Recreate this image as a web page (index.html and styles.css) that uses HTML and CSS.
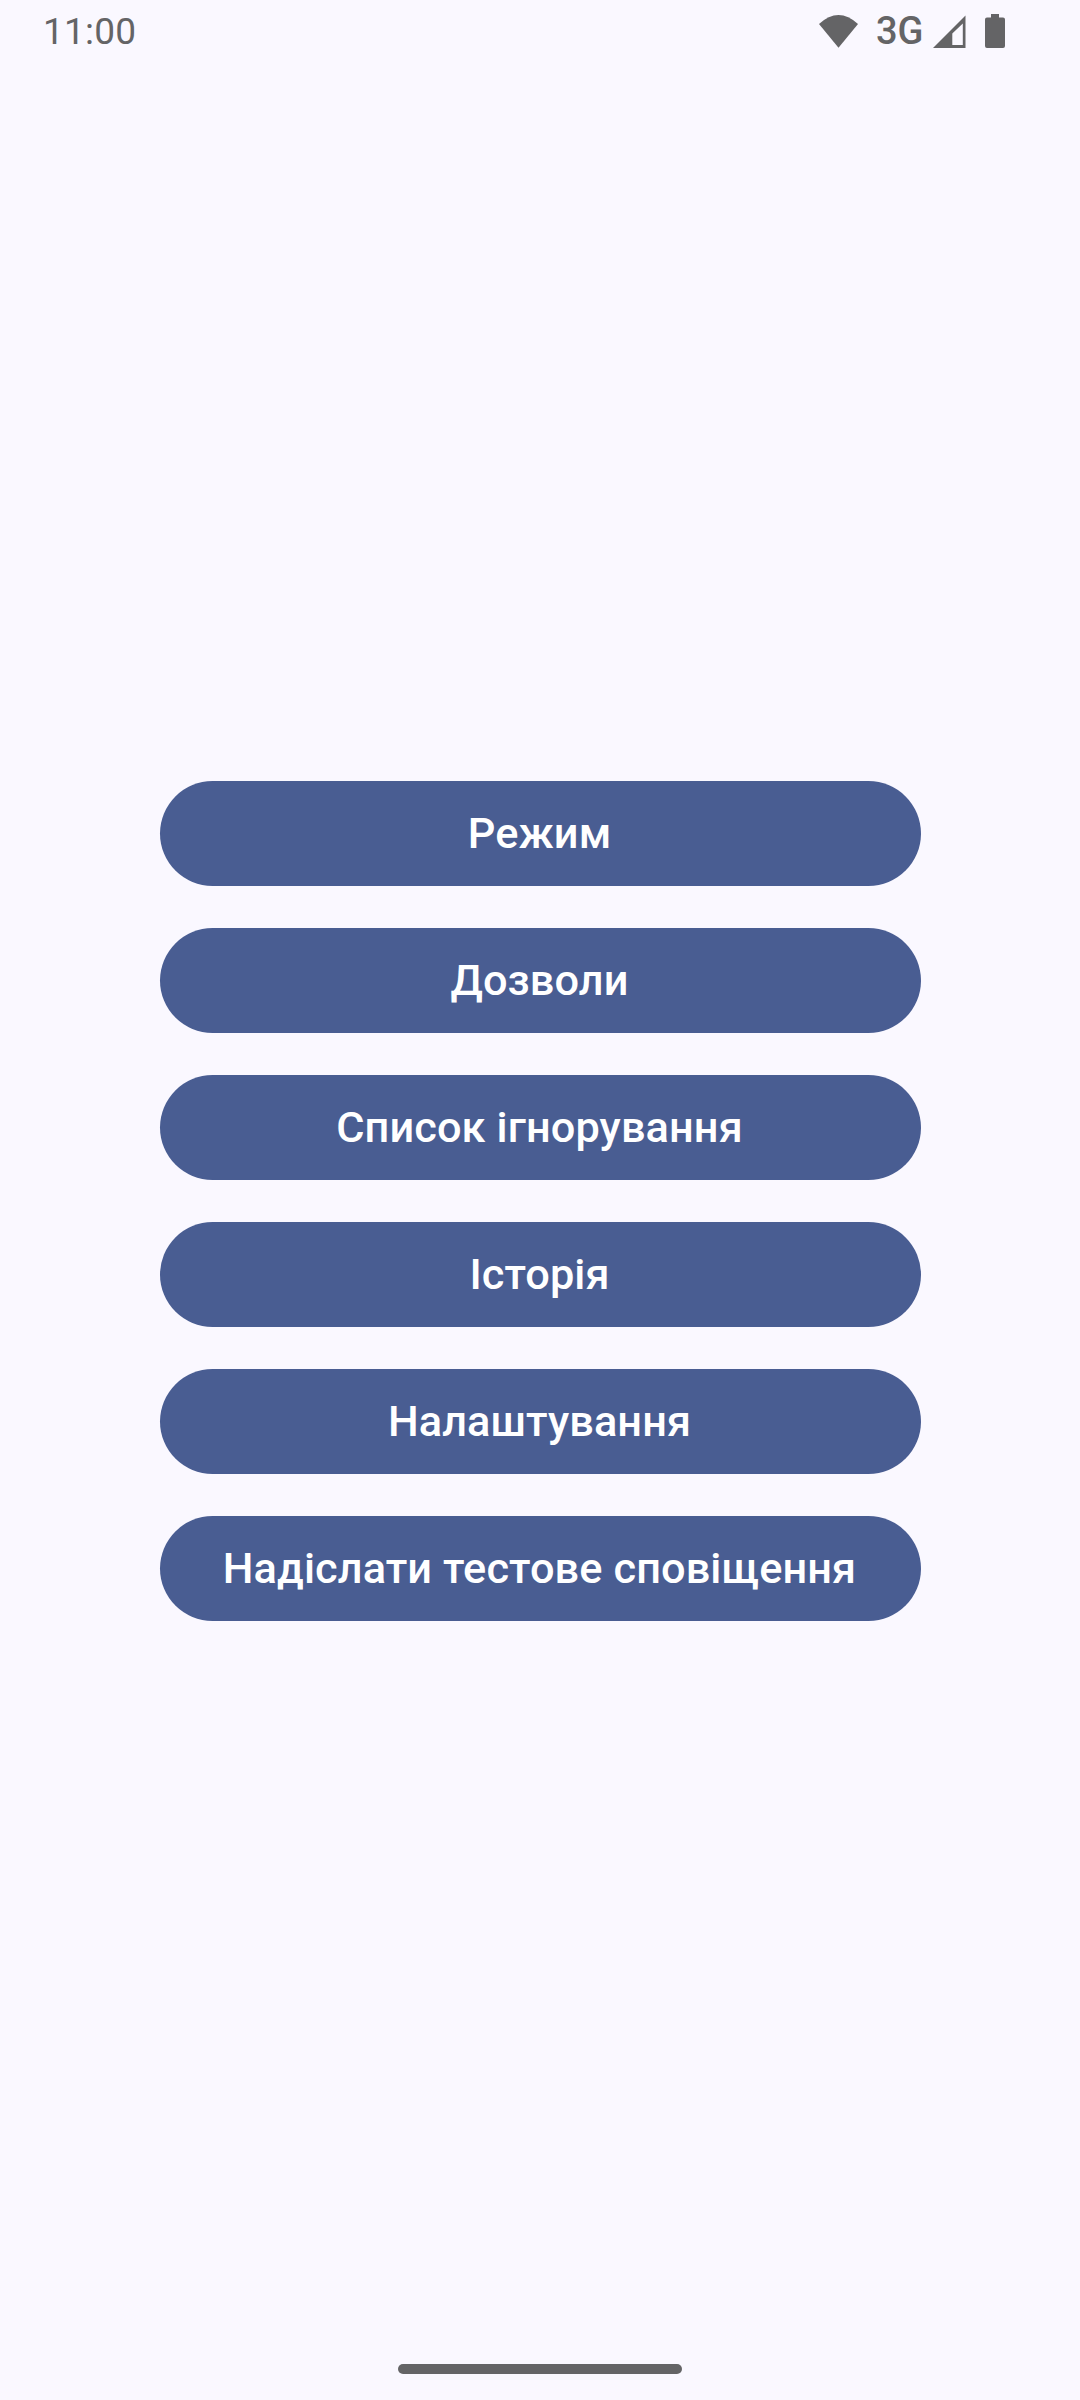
FILE: index.html
```html
<!DOCTYPE html>
<html lang="uk">
<head>
<meta charset="utf-8">
<title>Меню</title>
<link rel="stylesheet" href="styles.css">
</head>
<body>
<header class="status">
<span class="clock">11:00</span>
<div class="indicators">
<svg class="wifi" width="39" height="33" viewBox="0 0 39 33"><path d="M0 9Q19.500-9 39 9L19.500 32.800Z"/></svg>
<span class="network">3G</span>
<svg class="signal" width="33" height="33" viewBox="0 0 33 33"><path fill-rule="evenodd" d="M32.500 .5V33H0ZM29.800 8.500L19.300 18.500V30H29.800Z"/></svg>
<svg class="battery" width="20" height="34" viewBox="0 0 20 34"><path d="M6 0h8v3.500h4q2 0 2 2V32q0 2-2 2H2q-2 0-2-2V5.500q0-2 2-2h4Z"/></svg>
</div>
</header>
<main class="menu">
<button class="item">Режим</button>
<button class="item">Дозволи</button>
<button class="item">Список ігнорування</button>
<button class="item">Історія</button>
<button class="item">Налаштування</button>
<button class="item">Надіслати тестове сповіщення</button>
</main>
<footer class="nav"><div class="handle"></div></footer>
</body>
</html>
```
FILE: styles.css
```css
* { box-sizing: border-box; }
body { margin: 0; height: 2400px; background: #faf8ff; font-family: Roboto, sans-serif; display: flex; flex-direction: column; }
.status { height: 63px; padding: 0 75px 1px 43px; display: flex; justify-content: space-between; align-items: center; color: #646466; }
.clock { font-size: 37px; letter-spacing: .2px; }
.indicators { display: flex; align-items: center; fill: currentColor; }
.network { width: 48px; font-size: 38px; font-weight: 500; line-height: 44px; margin-left: 18px; white-space: nowrap; }
.signal { margin-left: 9px; }
.battery { margin-left: 19px; }
.menu { flex: 1; display: flex; flex-direction: column; align-items: stretch; gap: 42px; padding: 718px 159px 0 160px; }
.item { height: 105px; border: 0; border-radius: 53px; padding: 0 2px 1px 0; background: #495d92; color: #fff; font: 500 43.3px Roboto, sans-serif; letter-spacing: .1px; }
.nav { height: 63px; display: flex; justify-content: center; align-items: center; }
.handle { width: 284px; height: 10px; border-radius: 5px; background: #646466; }
```
